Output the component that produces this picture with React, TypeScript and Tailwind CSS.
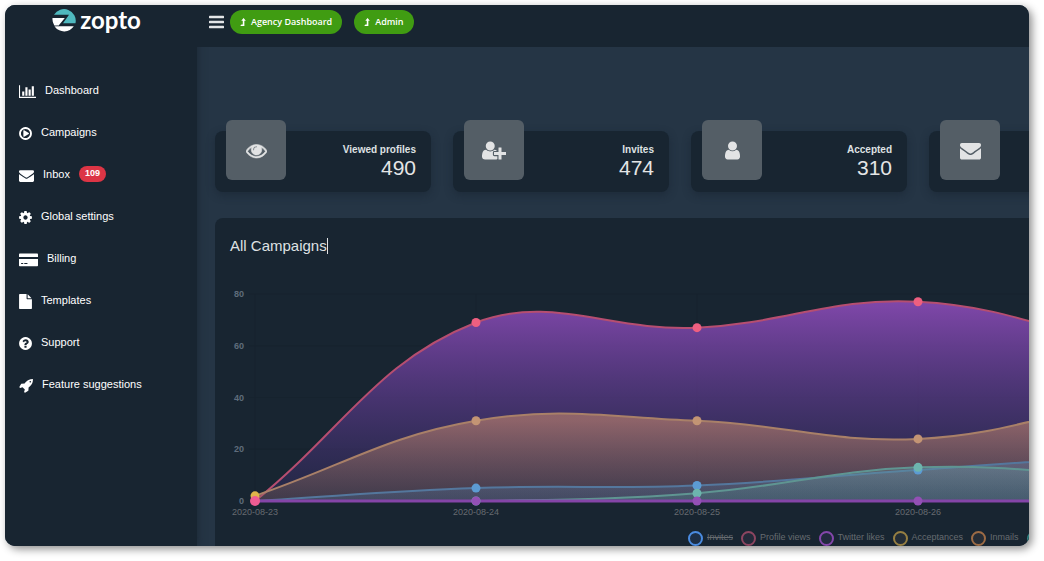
import type { ReactNode } from "react";

type Glyph = { box: string; path: string };

const glyphs: Record<string, Glyph> = {
  bars: {
    box: "128 0 1536 1792",
    path: "M1664 1344v128q0 26-19 45t-45 19h-1408q-26 0-45-19t-19-45v-128q0-26 19-45t45-19h1408q26 0 45 19t19 45zm0-512v128q0 26-19 45t-45 19h-1408q-26 0-45-19t-19-45v-128q0-26 19-45t45-19h1408q26 0 45 19t19 45zm0-512v128q0 26-19 45t-45 19h-1408q-26 0-45-19t-19-45v-128q0-26 19-45t45-19h1408q26 0 45 19t19 45z",
  },
  chart: {
    box: "0 0 2048 1792",
    path: "M640 896v512h-256v-512h256zm384-512v1024h-256v-1024h256zm1024 1152v128h-2048v-1536h128v1408h1920zm-640-896v768h-256v-768h256zm384-384v1152h-256v-1152h256z",
  },
  play: {
    box: "0 0 1536 1792",
    path: "M1184 896q0 37-32 55l-544 320q-15 9-32 9-16 0-32-8-32-19-32-56v-640q0-37 32-56 33-18 64 1l544 320q32 18 32 55zm128 0q0-148-73-273t-198-198-273-73-273 73-198 198-73 273 73 273 198 198 273 73 273-73 198-198 73-273zm224 0q0 209-103 385.5t-279.5 279.5-385.5 103-385.5-103-279.5-279.5-103-385.5 103-385.5 279.5-279.5 385.5-103 385.5 103 279.5 279.5 103 385.5z",
  },
  envelope: {
    box: "0 0 1792 1792",
    path: "M1792 710v794q0 66-47 113t-113 47h-1472q-66 0-113-47t-47-113v-794q44 49 101 87 362 246 497 345 57 42 92.5 65.5t94.5 48 110 24.5h2q51 0 110-24.5t94.5-48 92.5-65.5q170-123 498-345 57-39 100-87zm0-294q0 79-49 151t-122 123q-376 261-468 325-10 7-42.5 31t-54 38.5-52 32.5-57.5 27-50 9h-2q-23 0-50-9t-57.5-27-52-32.5-54-38.5-42.5-31q-91-64-262-182.5t-205-142.5q-62-42-117-115.5t-55-136.5q0-78 41.5-130t118.5-52h1472q65 0 112.5 47t47.5 113z",
  },
  cog: {
    box: "128 0 1536 1792",
    path: "M1152 896q0-106-75-181t-181-75-181 75-75 181 75 181 181 75 181-75 75-181zm512-109v222q0 12-8 23t-20 13l-185 28q-19 54-39 91 35 50 107 138 10 12 10 25t-9 23q-27 37-99 108t-94 71q-12 0-26-9l-138-108q-44 23-91 38-16 136-29 186-7 28-36 28h-222q-14 0-24.5-8.5t-11.5-21.5l-28-184q-49-16-90-37l-141 107q-10 9-25 9-14 0-25-11-126-114-165-168-7-10-7-23 0-12 8-23 15-21 51-66.5t54-70.5q-27-50-41-99l-183-27q-13-2-21-12.5t-8-23.5v-222q0-12 8-23t19-13l186-28q14-46 39-92-40-57-107-138-10-12-10-24 0-10 9-23 26-36 98.5-107.5t94.5-71.5q13 0 26 10l138 107q44-23 91-38 16-136 29-186 7-28 36-28h222q14 0 24.5 8.5t11.5 21.5l28 184q49 16 90 37l142-107q9-9 24-9 13 0 25 10 129 119 165 170 7 8 7 22 0 12-8 23-15 21-51 66.5t-54 70.5q26 50 41 98l183 28q13 2 21 12.5t8 23.5z",
  },
  card: {
    box: "0 0 2304 1792",
    path: "M0 276q0-96 96-96h2112q96 0 96 96v310h-2304zM0 826h2304v800q0 96-96 96h-2112q-96 0-96-96zM256 1330v120h256v-120zM640 1330v120h384v-120z",
  },
  file: {
    box: "128 0 1536 1792",
    path: "M1152 512v-472q22 14 36 28l408 408q14 14 28 36h-472zm-128 32q0 40 28 68t68 28h544v1056q0 40-28 68t-68 28h-1344q-40 0-68-28t-28-68v-1600q0-40 28-68t68-28h800v544z",
  },
  question: {
    box: "128 0 1536 1792",
    path: "M1024 1376v-192q0-14-9-23t-23-9h-192q-14 0-23 9t-9 23v192q0 14 9 23t23 9h192q14 0 23-9t9-23zm256-672q0-88-55.5-163t-138.5-116-170-41q-243 0-371 213-15 24 8 42l132 100q7 6 19 6 16 0 25-12 53-68 86-92 34-24 86-24 48 0 85.5 26t37.5 59q0 38-20 61t-68 45q-63 28-115.5 86.5t-52.5 125.5v36q0 14 9 23t23 9h192q14 0 23-9t9-23q0-19 21.5-49.5t54.5-49.5q32-18 49-28.5t46-35 44.5-48 28-60.5 12.5-81zm384 192q0 209-103 385.5t-279.5 279.5-385.5 103-385.5-103-279.5-279.5-103-385.5 103-385.5 279.5-279.5 385.5-103 385.5 103 279.5 279.5 103 385.5z",
  },
  rocket: {
    box: "0 0 1664 1792",
    path: "M1440 448q0-40-28-68t-68-28-68 28-28 68 28 68 68 28 68-28 28-68zm224-288q0 249-75.5 430.5t-253.5 360.5q-81 80-195 176l-20 379q-2 16-16 26l-384 224q-7 4-16 4-12 0-23-9l-64-64q-13-14-8-32l85-276-281-281-276 85q-3 1-9 1-14 0-23-9l-64-64q-17-19-5-39l224-384q10-14 26-16l379-20q96-114 176-195 188-187 358-258t431-71q14 0 24 9.5t10 22.5z",
  },
  eye: {
    box: "0 0 1792 1792",
    path: "M1664 960q-152-236-381-353 61 104 61 225 0 185-131.5 316.5t-316.5 131.5-316.5-131.5-131.5-316.5q0-121 61-225-229 117-381 353 133 205 333.5 326.5t434.5 121.5 434.5-121.5 333.5-326.5zm-720-384q0-20-14-34t-34-14q-125 0-214.5 89.5t-89.5 214.5q0 20 14 34t34 14 34-14 14-34q0-86 61-147t147-61q20 0 34-14t14-34zm848 384q0 34-20 69-140 230-376.5 368.5t-499.5 138.5-499.5-139-376.5-368q-20-35-20-69t20-69q140-229 376.5-368t499.5-139 499.5 139 376.5 368q20 35 20 69z",
  },
  userPlus: {
    box: "0 0 2048 1792",
    path: "M704 896q-159 0-271.5-112.5t-112.5-271.5 112.5-271.5 271.5-112.5 271.5 112.5 112.5 271.5-112.5 271.5-271.5 112.5zm960 128h352q13 0 22.5 9.5t9.5 22.5v192q0 13-9.5 22.5t-22.5 9.5h-352v352q0 13-9.5 22.5t-22.5 9.5h-192q-13 0-22.5-9.5t-9.5-22.5v-352h-352q-13 0-22.5-9.5t-9.5-22.5v-192q0-13 9.5-22.5t22.5-9.5h352v-352q0-13 9.5-22.5t22.5-9.5h192q13 0 22.5 9.5t9.5 22.5v352zm-736 224q0 52 38 90t90 38h256v238q-68 50-171 50h-874q-121 0-194-69t-73-190q0-53 3.5-103.5t14-109 26.5-108.5 43-97.5 62-81 85.5-53.5 111.5-20q19 0 39 17 79 61 154.5 91.5t164.5 30.5 164.5-30.5 154.5-91.5q20-17 39-17 132 0 217 96h-223q-52 0-90 38t-38 90v192z",
  },
  user: {
    box: "256 0 1280 1792",
    path: "M1536 1399q0 109-62.5 187t-150.5 78h-854q-88 0-150.5-78t-62.5-187q0-85 8.5-160.5t31.5-152 58.5-131 94-89 134.5-34.5q131 128 313 128t313-128q76 0 134.5 34.5t94 89 58.5 131 31.5 152 8.5 160.5zm-256-887q0 159-112.5 271.5t-271.5 112.5-271.5-112.5-112.5-271.5 112.5-271.5 271.5-112.5 271.5 112.5 112.5 271.5z",
  },
  levelUp: {
    box: "0 0 10 14",
    path: "M6 0l4 5h-2.600v9h-7.200l2-2.600h2.400v-6.400h-2.600z",
  },
};

function Icon({ name, className }: { name: string; className: string }) {
  const glyph = glyphs[name];
  return (
    <svg
      viewBox={glyph.box}
      className={className}
      fill="currentColor"
      fillRule={name === "card" ? "evenodd" : "nonzero"}
      stroke={name === "eye" ? "currentColor" : "none"}
      strokeWidth="50"
      aria-hidden="true"
    >
      <path d={glyph.path} />
    </svg>
  );
}

const navItems = [
  { label: "Dashboard", icon: "chart", size: "h-[15px] w-[17px]" },
  { label: "Campaigns", icon: "play", size: "h-[15px] w-[13px]" },
  { label: "Inbox", icon: "envelope", size: "h-[15px] w-[15px]", badge: "109" },
  { label: "Global settings", icon: "cog", size: "h-[15px] w-[13px]" },
  { label: "Billing", icon: "card", size: "h-[15px] w-[19px]" },
  { label: "Templates", icon: "file", size: "h-[15px] w-[13px]" },
  { label: "Support", icon: "question", size: "h-[15px] w-[13px]" },
  { label: "Feature suggestions", icon: "rocket", size: "h-[15px] w-[14px]" },
];

const stats = [
  { label: "Viewed profiles", value: "490", icon: "eye", size: "h-[21px] w-[21px]" },
  { label: "Invites", value: "474", icon: "userPlus", size: "h-[21px] w-[24px]" },
  { label: "Accepted", value: "310", icon: "user", size: "h-[21px] w-[15px]" },
  { label: "", value: "", icon: "envelope", size: "h-[21px] w-[21px]" },
];

const legend = [
  { label: "Invites", ring: "border-[#4a8be0] bg-[#1d2f46]", hidden: true },
  { label: "Profile views", ring: "border-[#8c4560] bg-[#232a3a]" },
  { label: "Twitter likes", ring: "border-[#8446ab] bg-[#222a3f]" },
  { label: "Acceptances", ring: "border-[#967f42] bg-[#242d36]" },
  { label: "Inmails", ring: "border-[#9c6b45] bg-[#262d36]" },
  { label: "", ring: "border-[#2f8584] bg-[#1b2f3b]" },
];

const STEP = 221;
const LEFT = 40;
const BASE = 222;
const TOP = 15;
const px = (i: number) => LEFT + STEP * i;
const py = (v: number) => BASE - (v * (BASE - TOP)) / 80;

function curve(values: number[]) {
  const pts = values.map((v, i) => ({ x: px(i), y: py(v) }));
  const clamp = (y: number) => Math.min(BASE, Math.max(TOP, y));
  const ctrl = pts.map((p, i) => {
    const a = pts[i - 1] ?? p;
    const b = pts[i + 1] ?? p;
    const d0 = Math.hypot(p.x - a.x, p.y - a.y);
    const d1 = Math.hypot(b.x - p.x, b.y - p.y);
    const f0 = (0.4 * d0) / (d0 + d1);
    const f1 = (0.4 * d1) / (d0 + d1);
    return {
      before: [p.x - f0 * (b.x - a.x), clamp(p.y - f0 * (b.y - a.y))],
      after: [p.x + f1 * (b.x - a.x), clamp(p.y + f1 * (b.y - a.y))],
    };
  });
  return pts
    .map((p, i) => (i === 0 ? `M${p.x} ${p.y}` : `C${ctrl[i - 1].after} ${ctrl[i].before} ${p.x} ${p.y}`))
    .join("");
}

const series = [
  { id: "views", values: [0, 69, 67, 77, 58, 40], line: "#b64e70", dot: "#ee5f80", from: "#8549b0", fromOpacity: 0.95, to: "#43307c", toOpacity: 0.25 },
  { id: "accepted", values: [2, 31, 31, 24, 39, 45], line: "#a98068", dot: "#c39474", from: "#c3856c", fromOpacity: 0.6, to: "#8a6a5c", toOpacity: 0.28 },
  { id: "messages", values: [0, 5, 6, 12, 17, 15], line: "#54779d", dot: "#5c9bd3", from: "#5f8fc0", fromOpacity: 0.3, to: "#4b78a8", toOpacity: 0.25 },
  { id: "replies", values: [0, 0, 3, 13, 9, 5], line: "#5f9592", dot: "#6db5ae", from: "#6ba5a5", fromOpacity: 0.28, to: "#4f9090", toOpacity: 0.25 },
  { id: "likes", values: [0, 0, 0, 0, 0, 0], line: "#8445a8", dot: "#9350b5", from: "#8445a8", fromOpacity: 0, to: "#8445a8", toOpacity: 0 },
];

const dates = ["2020-08-23", "2020-08-24", "2020-08-25", "2020-08-26"];

function CampaignChart() {
  return (
    <svg viewBox="0 0 930 242" className="block w-full font-['Liberation_Sans',Arial,sans-serif] text-[9px]" role="img" aria-label="Campaign activity by day">
      <defs>
        {series.map((s) => (
          <linearGradient key={s.id} id={s.id} gradientUnits="userSpaceOnUse" x1="0" x2="0" y1={py(Math.max(...s.values.slice(0, 4)))} y2={BASE}>
            <stop offset="0" stopColor={s.from} stopOpacity={s.fromOpacity} />
            <stop offset="1" stopColor={s.to} stopOpacity={s.toOpacity} />
          </linearGradient>
        ))}
      </defs>
      {[80, 60, 40, 20, 0].map((v) => (
        <g key={v}>
          <line x1="34" x2="930" y1={py(v)} y2={py(v)} stroke="#16232e" />
          <text x="29" y={py(v) + 3} textAnchor="end" fontWeight="700" fill="#5f6c7b">
            {v}
          </text>
        </g>
      ))}
      {dates.map((d, i) => (
        <g key={d}>
          <line x1={px(i)} x2={px(i)} y1={TOP} y2={BASE} stroke="#16232e" />
          <text x={px(i)} y="236" textAnchor="middle" fill="#666b70">
            {d}
          </text>
        </g>
      ))}
      {series.map((s) => (
        <g key={s.id}>
          <path d={`${curve(s.values)}V${BASE}H${LEFT}Z`} fill={`url(#${s.id})`} />
          <path d={curve(s.values)} fill="none" stroke={s.line} strokeWidth={s.id === "likes" ? 3 : 2} />
        </g>
      ))}
      {series.map((s) =>
        s.values.slice(1).map((v, i) => (
          <circle key={`${s.id}${i}`} cx={px(i + 1)} cy={py(v)} r="4.500" fill={s.dot} />
        )),
      )}
      <circle cx={LEFT} cy={py(2)} r="4.500" fill="#dfb54a" />
      <circle cx={LEFT} cy={BASE} r="5" fill="#ef5c92" />
    </svg>
  );
}

function Logo() {
  return (
    <a href="#" className="flex h-8 items-center justify-center gap-1 text-white">
      <svg viewBox="0 0 24 24" className="h-6 w-6" aria-hidden="true">
        <path d="M2 5.800A11.700 11.700 0 0 1 23.500 14.200H11L17 5.800Z" fill="#4fb9bf" />
        <path d="M0.500 9H12.800L6 17.300H21.800A11.700 11.700 0 0 1 3 18L2.300 16.500A11.700 11.700 0 0 1 0.500 9Z" fill="#fff" />
        <path d="M1.500 17L6.500 16.800" fill="none" stroke="#182531" strokeWidth="0.800" />
      </svg>
      <span className="pb-[3px] font-['Lato',sans-serif] text-[24px] leading-6 font-bold">zopto</span>
    </a>
  );
}

function PillButton({ children }: { children: ReactNode }) {
  return (
    <button type="button" className="flex h-6 items-center gap-[5px] rounded-full bg-[#409c12] px-[10px] font-['Open_Sans',sans-serif] text-[9px] font-semibold text-white">
      <Icon name="levelUp" className="h-2 w-[6px]" />
      {children}
    </button>
  );
}

export default function App() {
  return (
    <div className="h-screen bg-white pt-[5px] pr-[15px] pb-[15px] pl-[5px] font-['Liberation_Sans',Arial,sans-serif]">
      <div className="flex h-full overflow-hidden rounded-[10px] bg-[#253545] shadow-[3px_3px_9px_rgba(0,0,0,0.45)]">
        <aside className="w-48 shrink-0 bg-[#182531] shadow-[0_0_8px_rgba(24,37,49,0.9)]">
          <div className="h-16 pr-[9px]">
            <Logo />
          </div>
          <nav>
            <ul>
              {navItems.map((item) => (
                <li key={item.label}>
                  <a href="#" className="flex h-[42px] items-center gap-[9px] pl-[14px] text-[11px] text-white">
                    <Icon name={item.icon} className={`mt-[2px] shrink-0 ${item.size}`} />
                    <span>{item.label}</span>
                    {item.badge && (
                      <span className="flex h-4 items-center rounded-full bg-[#dc3545] px-[6px] text-[9px] font-bold">{item.badge}</span>
                    )}
                  </a>
                </li>
              ))}
            </ul>
          </nav>
        </aside>

        <div className="flex min-w-0 flex-1 flex-col">
          <header className="z-10 flex h-[42px] shrink-0 items-start bg-[#182531] pt-[5px] pl-3">
            <button type="button" aria-label="Toggle menu" className="flex h-6 items-center text-[#e3e5e7]">
              <Icon name="bars" className="h-[18px] w-[15px]" />
            </button>
            <div className="ml-[6px] flex gap-3">
              <PillButton>Agency Dashboard</PillButton>
              <PillButton>Admin</PillButton>
            </div>
          </header>

          <main className="min-h-0 flex-1 overflow-hidden pt-[84px] pl-[18px]">
            <div className="w-full min-w-[930px]">
              <section className="grid grid-cols-4 gap-[22px]">
                {stats.map((stat) => (
                  <article key={stat.icon} className="flex h-[61px] items-start justify-between rounded-lg bg-[#182531] pr-[15px] pl-[11px] shadow-[0_3px_8px_rgba(20,32,44,0.45)]">
                    <div className="-mt-[11px] flex size-[60px] items-center justify-center rounded-md bg-[#545e66] text-[#e2e3e4]">
                      <Icon name={stat.icon} className={stat.size} />
                    </div>
                    <div className="pt-3 text-right">
                      <p className="text-[10px] leading-[14px] font-bold text-[#dfe1e3]">{stat.label}</p>
                      <p className="text-[21px] leading-[22px] text-[#e4e5e6]">{stat.value}</p>
                    </div>
                  </article>
                ))}
              </section>

              <section className="mt-[26px] rounded-lg bg-[#182531] pb-8">
                <div className="flex h-[61px] items-start pt-5 pl-[15px]">
                  <h2 className="border-r border-[#dfe1e3] text-[15px] leading-4 text-[#dfe1e3]">All Campaigns</h2>
                </div>
                <CampaignChart />
                <ul className="flex h-[34px] items-center gap-2 pl-[473px]">
                  {legend.map((item) => (
                    <li key={item.ring}>
                      <button type="button" aria-label={item.label || "Series"} className="flex items-center gap-1 text-[9px] whitespace-nowrap text-[#666b70]">
                        <span className={`size-[15px] rounded-full border-2 ${item.ring}`} />
                        <span className={item.hidden ? "line-through" : ""}>{item.label}</span>
                      </button>
                    </li>
                  ))}
                </ul>
              </section>
            </div>
          </main>
        </div>
      </div>
    </div>
  );
}
